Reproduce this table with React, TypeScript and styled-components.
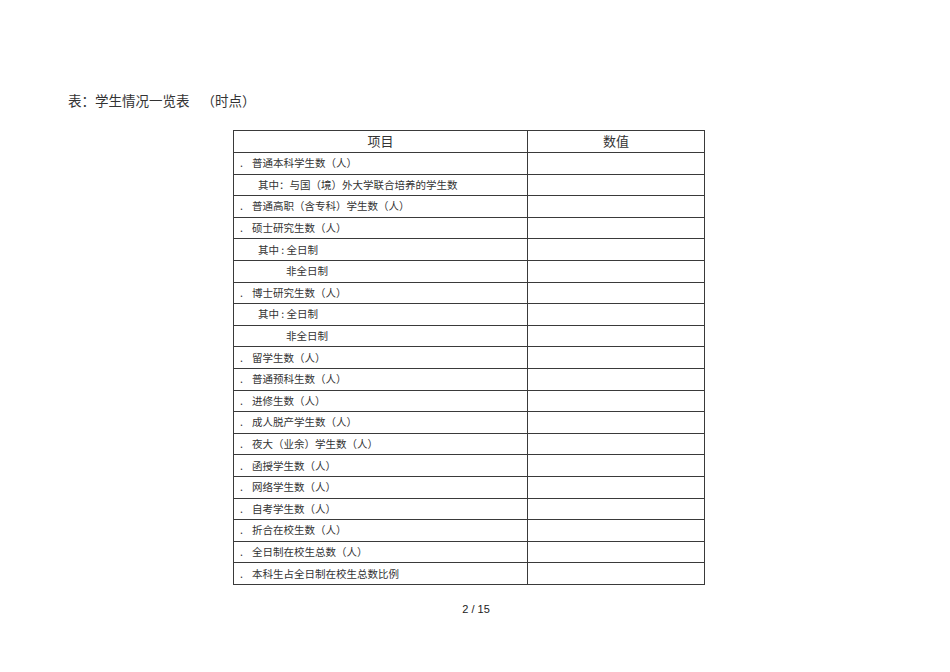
import React from 'react'
import styled, { createGlobalStyle } from 'styled-components'

const GlobalStyle = createGlobalStyle`
  html, body {
    margin: 0;
    padding: 0;
    background: #fff;
  }
  body {
    font-family: "Liberation Sans", "Noto Sans CJK SC", sans-serif;
    color: #333;
  }
`

interface Row {
  text: string
  level: 0 | 1 | 2
}

const rows: Row[] = [
  { text: '普通本科学生数（人）', level: 0 },
  { text: '其中：与国（境）外大学联合培养的学生数', level: 1 },
  { text: '普通高职（含专科）学生数（人）', level: 0 },
  { text: '硕士研究生数（人）', level: 0 },
  { text: '其中 : 全日制', level: 1 },
  { text: '非全日制', level: 2 },
  { text: '博士研究生数（人）', level: 0 },
  { text: '其中 : 全日制', level: 1 },
  { text: '非全日制', level: 2 },
  { text: '留学生数（人）', level: 0 },
  { text: '普通预科生数（人）', level: 0 },
  { text: '进修生数（人）', level: 0 },
  { text: '成人脱产学生数（人）', level: 0 },
  { text: '夜大（业余）学生数（人）', level: 0 },
  { text: '函授学生数（人）', level: 0 },
  { text: '网络学生数（人）', level: 0 },
  { text: '自考学生数（人）', level: 0 },
  { text: '折合在校生数（人）', level: 0 },
  { text: '全日制在校生总数（人）', level: 0 },
  { text: '本科生占全日制在校生总数比例', level: 0 },
]

export default function App() {
  return (
    <Page>
      <GlobalStyle />
      <Title>
        表：学生情况一览表<TitleNote>（时点）</TitleNote>
      </Title>
      <TableWrap>
        <Table>
          <colgroup>
            <col style={{ width: 294 }} />
            <col style={{ width: 177 }} />
          </colgroup>
          <thead>
            <tr>
              <HeadCell>项目</HeadCell>
              <HeadCell>数值</HeadCell>
            </tr>
          </thead>
          <tbody>
            {rows.map((row, i) => (
              <tr key={i}>
                <ItemCell $level={row.level}>
                  {row.level === 0 && <Dot>.</Dot>}
                  {row.text}
                </ItemCell>
                <ValueCell />
              </tr>
            ))}
          </tbody>
        </Table>
      </TableWrap>
      <PageNum>2 / 15</PageNum>
    </Page>
  )
}

const Page = styled.div`
  width: 950px;
  height: 672px;
  padding-top: 90px;
  box-sizing: border-box;
`

const Title = styled.div`
  padding-left: 68px;
  font-family: "Noto Sans CJK SC", sans-serif;
  font-size: 13.5px;
  line-height: 20px;
  color: #333;
`

const TitleNote = styled.span`
  margin-left: 12px;
`

const TableWrap = styled.div`
  padding-left: 233px;
  margin-top: 20px;
`

const Table = styled.table`
  border-collapse: collapse;
  table-layout: fixed;
  width: 472px;
  font-family: "Noto Sans CJK SC", sans-serif;
`

const HeadCell = styled.th`
  height: 19px;
  padding: 0 0 2px;
  border: 1px solid #3a3a3a;
  font-weight: normal;
  font-size: 13px;
  line-height: 19px;
  color: #333;
  text-align: center;
`

const ItemCell = styled.td<{ $level: number }>`
  height: 20.6px;
  padding: 0 0 0 ${p => (p.$level === 0 ? 6 : p.$level === 1 ? 24 : 52)}px;
  border: 1px solid #3a3a3a;
  font-size: 10.5px;
  line-height: 20px;
  color: #333;
  white-space: nowrap;
`

const Dot = styled.span`
  display: inline-block;
  width: 12px;
`

const ValueCell = styled.td`
  padding: 0;
  border: 1px solid #3a3a3a;
`

const PageNum = styled.div`
  margin-top: 18px;
  text-align: center;
  padding-left: 2px;
  font-family: "Liberation Sans", sans-serif;
  font-size: 11px;
  color: #222;
`
